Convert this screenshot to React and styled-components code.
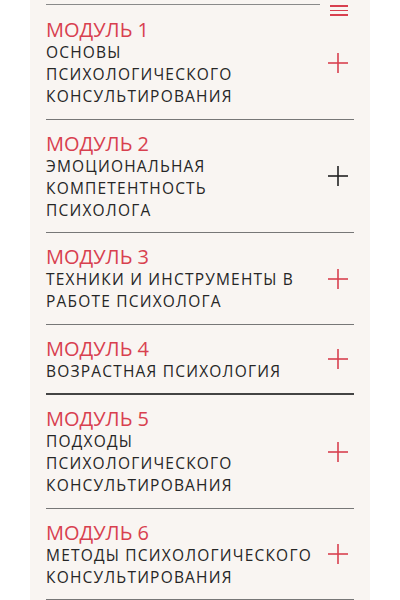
import React from 'react';
import styled, { createGlobalStyle } from 'styled-components';

const Global = createGlobalStyle`
    html, body {
        margin: 0;
        padding: 0;
        background: #ffffff;
    }
    body {
        font-family: "Open Sans", "Liberation Sans", sans-serif;
        overflow: hidden;
    }
`;

const Panel = styled.div`
    width: 340px;
    margin-left: 30px;
    min-height: 600px;
    background: #f9f5f2;
    padding: 0 16px;
    box-sizing: border-box;
`;

const TopRow = styled.div`
    display: flex;
    align-items: flex-start;
    height: 2px;
    padding-top: 4px;
`;

const TopLine = styled.div`
    flex: 1;
    height: 1px;
    background: #8a8a8a;
`;

const MenuButton = styled.div`
    width: 18px;
    margin: 1px 6px 0 10px;
    display: flex;
    flex-direction: column;
    gap: 3px;
    > span {
        display: block;
        height: 1.5px;
        background: #d8404f;
    }
`;

const Item = styled.div`
    display: flex;
    align-items: center;
    padding: 12px 0 11.5px;
    border-bottom: ${p => p.$strong ? '2px solid #444' : '1px solid #777'};
`;

const Texts = styled.div`
    flex: 1;
`;

const Heading = styled.div`
    color: #d8404f;
    font-size: 20px;
    line-height: 23px;
    font-weight: 400;
    letter-spacing: 0;
`;

const Title = styled.div`
    color: #262626;
    font-size: 15.5px;
    line-height: 22px;
    letter-spacing: 1.2px;
    text-transform: uppercase;
`;

const PlusIcon = ({ color }) => (
    <svg width="20" height="20" viewBox="0 0 20 20" style={{ flexShrink: 0, marginRight: 6 }}>
        <line x1="10" y1="0" x2="10" y2="20" stroke={color} strokeWidth="1.6" />
        <line x1="0" y1="10" x2="20" y2="10" stroke={color} strokeWidth="1.6" />
    </svg>
);

const modules = [
    { n: 1, title: ['Основы', 'психологического', 'консультирования'] },
    { n: 2, title: ['Эмоциональная', 'компетентность', 'психолога'], dark: true },
    { n: 3, title: ['Техники и инструменты в', 'работе психолога'] },
    { n: 4, title: ['Возрастная психология'], strong: true },
    { n: 5, title: ['Подходы', 'психологического', 'консультирования'] },
    { n: 6, title: ['Методы психологического', 'консультирования'] },
];

const App = () => (
    <>
        <Global />
        <Panel>
            <TopRow>
                <TopLine />
                <MenuButton>
                    <span /><span /><span />
                </MenuButton>
            </TopRow>
            {modules.map(m => (
                <Item key={m.n} $strong={m.strong}>
                    <Texts>
                        <Heading>МОДУЛЬ {m.n}</Heading>
                        {m.title.map(t => <Title key={t}>{t}</Title>)}
                    </Texts>
                    <PlusIcon color={m.dark ? '#222' : '#d8404f'} />
                </Item>
            ))}
        </Panel>
    </>
);

export default App;
